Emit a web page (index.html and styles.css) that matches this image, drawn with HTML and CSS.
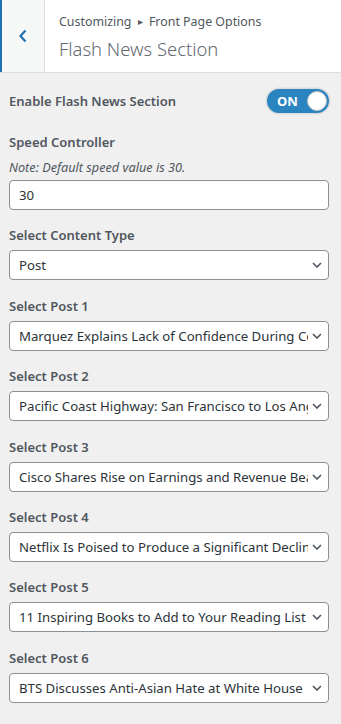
FILE: index.html
```html
<!DOCTYPE html>
<html lang="en">
<head>
<meta charset="utf-8">
<title>Flash News Section</title>
<link rel="stylesheet" href="styles.css">
</head>
<body>
<header class="header">
  <button class="back" aria-label="Back">
    <svg width="10" height="14" viewBox="0 0 10 14"><path d="M7.5 1.5 L2.5 7 L7.5 12.5" fill="none" stroke="#2271b1" stroke-width="2.2"/></svg>
  </button>
  <div class="titles">
    <div class="crumb">Customizing <span class="tri">&#9656;</span> Front Page Options</div>
    <h1 class="title">Flash News Section</h1>
  </div>
</header>
<main class="content">
  <div class="toggle-row">
    <span class="label">Enable Flash News Section</span>
    <span class="toggle"><span class="on">ON</span><span class="knob"></span></span>
  </div>

  <div class="control">
    <span class="label">Speed Controller</span>
    <span class="note">Note: Default speed value is 30.</span>
    <div class="field">30</div>
  </div>

  <div class="control">
    <span class="label">Select Content Type</span>
    <div class="field select"><span class="val">Post</span><svg class="chev" width="10" height="6" viewBox="0 0 10 6"><path d="M1 1 L5 5 L9 1" fill="none" stroke="#50575e" stroke-width="1.6"/></svg></div>
  </div>

  <div class="control">
    <span class="label">Select Post 1</span>
    <div class="field select"><span class="val">Marquez Explains Lack of Confidence During Comeback</span><svg class="chev" width="10" height="6" viewBox="0 0 10 6"><path d="M1 1 L5 5 L9 1" fill="none" stroke="#50575e" stroke-width="1.6"/></svg></div>
  </div>

  <div class="control">
    <span class="label">Select Post 2</span>
    <div class="field select"><span class="val">Pacific Coast Highway: San Francisco to Los Angeles</span><svg class="chev" width="10" height="6" viewBox="0 0 10 6"><path d="M1 1 L5 5 L9 1" fill="none" stroke="#50575e" stroke-width="1.6"/></svg></div>
  </div>

  <div class="control">
    <span class="label">Select Post 3</span>
    <div class="field select"><span class="val">Cisco Shares Rise on Earnings and Revenue Beat</span><svg class="chev" width="10" height="6" viewBox="0 0 10 6"><path d="M1 1 L5 5 L9 1" fill="none" stroke="#50575e" stroke-width="1.6"/></svg></div>
  </div>

  <div class="control">
    <span class="label">Select Post 4</span>
    <div class="field select"><span class="val">Netflix Is Poised to Produce a Significant Decline</span><svg class="chev" width="10" height="6" viewBox="0 0 10 6"><path d="M1 1 L5 5 L9 1" fill="none" stroke="#50575e" stroke-width="1.6"/></svg></div>
  </div>

  <div class="control">
    <span class="label">Select Post 5</span>
    <div class="field select"><span class="val">11 Inspiring Books to Add to Your Reading List</span><svg class="chev" width="10" height="6" viewBox="0 0 10 6"><path d="M1 1 L5 5 L9 1" fill="none" stroke="#50575e" stroke-width="1.6"/></svg></div>
  </div>

  <div class="control">
    <span class="label">Select Post 6</span>
    <div class="field select"><span class="val">BTS Discusses Anti-Asian Hate at White House</span><svg class="chev" width="10" height="6" viewBox="0 0 10 6"><path d="M1 1 L5 5 L9 1" fill="none" stroke="#50575e" stroke-width="1.6"/></svg></div>
  </div>
</main>
</body>
</html>
```
FILE: styles.css
```css
* { box-sizing: border-box; }
html, body { margin: 0; padding: 0; }
body {
  background: #f0f0f1;
  font-family: "Noto Sans", "Open Sans", sans-serif;
  color: #50575e;
  width: 341px;
  height: 724px;
  overflow: hidden;
}
.header {
  display: flex;
  height: 73px;
  background: #fff;
  border-bottom: 1px solid #dcdcde;
}
.back {
  width: 45px;
  height: 72px;
  padding: 0;
  margin: 0;
  background: #f6f7f7;
  border: 0;
  border-left: 2px solid #2271b1;
  border-right: 1px solid #dcdcde;
  display: flex;
  align-items: center;
  justify-content: center;
}
.titles {
  padding: 12px 0 0 14px;
}
.crumb {
  font-size: 12.4px;
  line-height: 20px;
  color: #50575e;
}
.tri { font-size: 10px; position: relative; top: -1px; margin: 0 3px; }
.title {
  margin: 4px 0 0;
  font-size: 18.4px;
  font-weight: 300;
  line-height: 26px;
  color: #646970;
}
.content {
  padding: 16px 12px 0 9px;
}
.toggle-row {
  display: flex;
  align-items: center;
  justify-content: space-between;
  height: 24px;
  margin-bottom: 19px;
}
.label {
  display: block;
  font-size: 13px;
  font-weight: 600;
  line-height: 20px;
  color: #50575e;
}
.toggle {
  width: 62px;
  height: 24px;
  border-radius: 12px;
  background: #2a84c0;
  box-shadow: 0 0 0 1.5px #dcdcde;
  display: flex;
  align-items: center;
  justify-content: space-between;
  padding: 0 2px 0 10px;
}
.on {
  color: #fff;
  font-weight: 700;
  font-size: 13px;
  line-height: 1;
}
.knob {
  width: 20px;
  height: 20px;
  border-radius: 50%;
  background: #fff;
  border: 1px solid #c3c4c7;
}
.control {
  display: flex;
  flex-direction: column;
  margin-bottom: 15.4px;
}
.control .label { margin-bottom: 5px; }
.note {
  font-size: 12.7px;
  font-style: italic;
  line-height: 19px;
  margin: 1px 0 3px;
  color: #50575e;
}
.field {
  height: 30px;
  background: #fff;
  border: 1px solid #8c8f94;
  border-radius: 4px;
  font-size: 13.2px;
  line-height: 28px;
  color: #2c3338;
  padding: 0 6px 0 9px;
}
.select {
  display: flex;
  align-items: center;
  gap: 4px;
}
.val {
  flex: 1;
  white-space: nowrap;
  overflow: hidden;
}
.chev { flex: none; }
```
